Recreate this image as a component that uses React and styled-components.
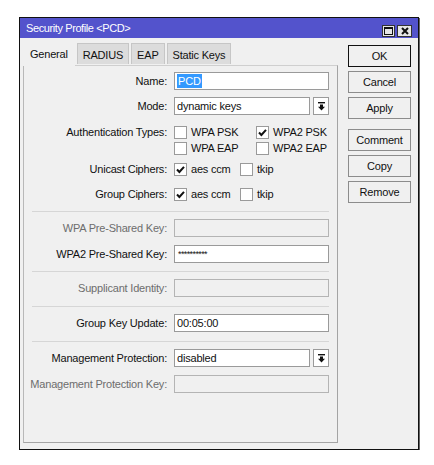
import React from "react";
import styled, { createGlobalStyle } from "styled-components";

const GlobalStyle = createGlobalStyle`
  html, body {
    margin: 0;
    padding: 0;
    background: #fff;
  }
  body {
    font-family: "Liberation Sans", Arial, sans-serif;
    font-size: 11px;
    letter-spacing: -0.2px;
    color: #000;
  }
`;

// #####################################################################

const Page = styled.div`
  padding: 17px 0 0 19px;
`;

const Window = styled.div`
  width: 400px;
  height: 433px;
  box-sizing: border-box;
  border: 1px solid #111;
  box-shadow: 1px 1px 0 #666;
  background: #f0f0f0;
  display: flex;
  flex-direction: column;
`;

const TitleBar = styled.div`
  height: 20px;
  flex: none;
  background: #5353cc;
  color: #fff;
  display: flex;
  align-items: center;
  justify-content: space-between;
  padding: 0 6px 0 6px;
  letter-spacing: -0.4px;
`;

const TitleButtons = styled.div`
  display: flex;
  gap: 2px;
  align-self: flex-end;
  margin-bottom: 1px;
`;

const TitleButton = styled.div`
  width: ${p => p.$w}px;
  height: 12px;
  box-sizing: border-box;
  background: #e6e6e6;
  border: 1px solid #333;
  display: flex;
  align-items: center;
  justify-content: center;
`;

// #####################################################################

const Body = styled.div`
  flex: 1;
  display: flex;
  padding: 3px 6px 6px 3px;
  min-height: 0;
`;

const LeftCol = styled.div`
  width: 315px;
  display: flex;
  flex-direction: column;
`;

const Tabs = styled.div`
  display: flex;
  align-items: flex-start;
  height: 24px;
  gap: 2px;
  position: relative;
  z-index: 1;
`;

const Tab = styled.div`
  box-sizing: border-box;
  display: flex;
  align-items: center;
  padding: ${p => (p.$active ? "0 7px" : "1px 5px 0")};
  height: ${p => (p.$active ? "25px" : "21px")};
  margin-top: ${p => (p.$active ? "0" : "2px")};
  background: ${p => (p.$active ? "#f0f0f0" : "#dcdcdc")};
  border: ${p => (p.$active ? "none" : "1px solid #c6c6c6")};
  border-bottom: none;
  color: #111;
  white-space: nowrap;
`;

const Panel = styled.div`
  flex: 1;
  border: 1px solid #a4a4a4;
  border-top-color: #cfcfcf;
  border-left-color: #b8b8b8;
  padding-top: 6px;
  display: flex;
  flex-direction: column;
`;

const Row = styled.div`
  display: flex;
  align-items: ${p => (p.$top ? "flex-start" : "center")};
  min-height: 18px;
  margin-top: ${p => p.$mt || 0}px;
`;

const Label = styled.div`
  width: 143px;
  flex: none;
  text-align: right;
  padding-right: 7px;
  color: ${p => (p.$disabled ? "#6d6d6d" : "#111")};
  white-space: nowrap;
  line-height: ${p => (p.$top ? "16px" : "normal")};
`;

const Input = styled.div`
  width: 155px;
  height: 18px;
  box-sizing: border-box;
  border: 1px solid ${p => (p.$disabled ? "#b4b4b4" : "#9a9a9a")};
  background: ${p => (p.$disabled ? "#f0f0f0" : "#fff")};
  display: flex;
  align-items: center;
  padding-left: 2px;
  color: #111;
  overflow: hidden;
  white-space: nowrap;
`;

const Selected = styled.span`
  background: #3399ff;
  color: #fff;
  padding: 0 1px;
  line-height: 14px;
`;

const Password = styled.span`
  letter-spacing: -0.6px;
  font-size: 9px;
  padding-left: 1px;
`;

const SelectWrap = styled.div`
  display: flex;
  gap: 3px;
`;

const SelectBox = styled(Input)`
  width: 136px;
`;

const ArrowButton = styled.div`
  width: 16px;
  height: 18px;
  box-sizing: border-box;
  border: 1px solid #9a9a9a;
  background: #fff;
  display: flex;
  align-items: center;
  justify-content: center;
`;

const CheckGrid = styled.div`
  display: grid;
  grid-template-columns: ${p => p.$cols};
  row-gap: 0;
`;

const CheckItem = styled.label`
  display: flex;
  align-items: center;
  height: 16px;
  gap: 4px;
  white-space: nowrap;
  color: #111;
`;

const Box = styled.span`
  width: 13px;
  height: 13px;
  box-sizing: border-box;
  border: 1px solid #9a9a9a;
  background: #fff;
  display: flex;
  align-items: center;
  justify-content: center;
  flex: none;
`;

const Separator = styled.div`
  height: 1px;
  background: #d6d6d6;
  margin: ${p => p.$mt}px 0 0 8px;
  width: 297px;
`;

// #####################################################################

const ButtonCol = styled.div`
  margin-left: 10px;
  padding-top: 4px;
  display: flex;
  flex-direction: column;
`;

const Button = styled.div`
  width: 63px;
  height: 22px;
  box-sizing: border-box;
  border: 1px solid ${p => (p.$primary ? "#111" : "#8c8c8c")};
  background: #f0f0f0;
  display: flex;
  align-items: center;
  justify-content: center;
  margin-top: ${p => p.$mt}px;
  color: #111;
`;

// #####################################################################

const Arrow = () => (
  <svg width="9" height="9" viewBox="0 0 9 9">
    <rect x="1" y="0" width="7" height="1.4" fill="#111" />
    <path d="M3 2.5 H6 V4.8 H8 L4.5 8.6 L1 4.8 H3 Z" fill="#111" />
  </svg>
);

const Check = ({ on }) => (
  <Box>
    {on && (
      <svg width="11" height="11" viewBox="0 0 11 11">
        <path d="M2 5.5 L4.4 8 L9 2.8" stroke="#111" strokeWidth="2" fill="none" />
      </svg>
    )}
  </Box>
);

const CheckOpt = ({ on, children }) => (
  <CheckItem>
    <Check on={on} />
    {children}
  </CheckItem>
);

function App() {
  return (
    <Page>
      <GlobalStyle />
      <Window>
        <TitleBar>
          <span>Security Profile &lt;PCD&gt;</span>
          <TitleButtons>
            <TitleButton $w={13}>
              <svg width="9" height="8" viewBox="0 0 9 8">
                <rect x="0.5" y="0.5" width="8" height="7" fill="none" stroke="#111" />
                <rect x="0" y="0" width="9" height="2" fill="#111" />
              </svg>
            </TitleButton>
            <TitleButton $w={15}>
              <svg width="8" height="8" viewBox="0 0 8 8">
                <path d="M1 1 L7 7 M7 1 L1 7" stroke="#111" strokeWidth="2" />
              </svg>
            </TitleButton>
          </TitleButtons>
        </TitleBar>

        <Body>
          <LeftCol>
            <Tabs>
              <Tab $active>General</Tab>
              <Tab>RADIUS</Tab>
              <Tab>EAP</Tab>
              <Tab>Static Keys</Tab>
            </Tabs>
            <Panel>
              <Row>
                <Label>Name:</Label>
                <Input>
                  <Selected>PCD</Selected>
                </Input>
              </Row>
              <Row $mt={7}>
                <Label>Mode:</Label>
                <SelectWrap>
                  <SelectBox>dynamic keys</SelectBox>
                  <ArrowButton><Arrow /></ArrowButton>
                </SelectWrap>
              </Row>
              <Row $mt={9} $top>
                <Label $top>Authentication Types:</Label>
                <CheckGrid $cols="82px auto">
                  <CheckOpt>WPA PSK</CheckOpt>
                  <CheckOpt on>WPA2 PSK</CheckOpt>
                  <CheckOpt>WPA EAP</CheckOpt>
                  <CheckOpt>WPA2 EAP</CheckOpt>
                </CheckGrid>
              </Row>
              <Row $mt={4}>
                <Label>Unicast Ciphers:</Label>
                <CheckGrid $cols="66px auto">
                  <CheckOpt on>aes ccm</CheckOpt>
                  <CheckOpt>tkip</CheckOpt>
                </CheckGrid>
              </Row>
              <Row $mt={7}>
                <Label>Group Ciphers:</Label>
                <CheckGrid $cols="66px auto">
                  <CheckOpt on>aes ccm</CheckOpt>
                  <CheckOpt>tkip</CheckOpt>
                </CheckGrid>
              </Row>

              <Separator $mt={8} />
              <Row $mt={7}>
                <Label $disabled>WPA Pre-Shared Key:</Label>
                <Input $disabled />
              </Row>
              <Row $mt={8}>
                <Label>WPA2 Pre-Shared Key:</Label>
                <Input>
                  <Password>**********</Password>
                </Input>
              </Row>

              <Separator $mt={8} />
              <Row $mt={7}>
                <Label $disabled>Supplicant Identity:</Label>
                <Input $disabled />
              </Row>

              <Separator $mt={9} />
              <Row $mt={7}>
                <Label>Group Key Update:</Label>
                <Input>00:05:00</Input>
              </Row>

              <Separator $mt={9} />
              <Row $mt={7}>
                <Label>Management Protection:</Label>
                <SelectWrap>
                  <SelectBox>disabled</SelectBox>
                  <ArrowButton><Arrow /></ArrowButton>
                </SelectWrap>
              </Row>
              <Row $mt={8}>
                <Label $disabled>Management Protection Key:</Label>
                <Input $disabled />
              </Row>
            </Panel>
          </LeftCol>

          <ButtonCol>
            <Button $primary $mt={0}>OK</Button>
            <Button $mt={4}>Cancel</Button>
            <Button $mt={4}>Apply</Button>
            <Button $mt={10}>Comment</Button>
            <Button $mt={4}>Copy</Button>
            <Button $mt={4}>Remove</Button>
          </ButtonCol>
        </Body>
      </Window>
    </Page>
  );
}

export default App;
